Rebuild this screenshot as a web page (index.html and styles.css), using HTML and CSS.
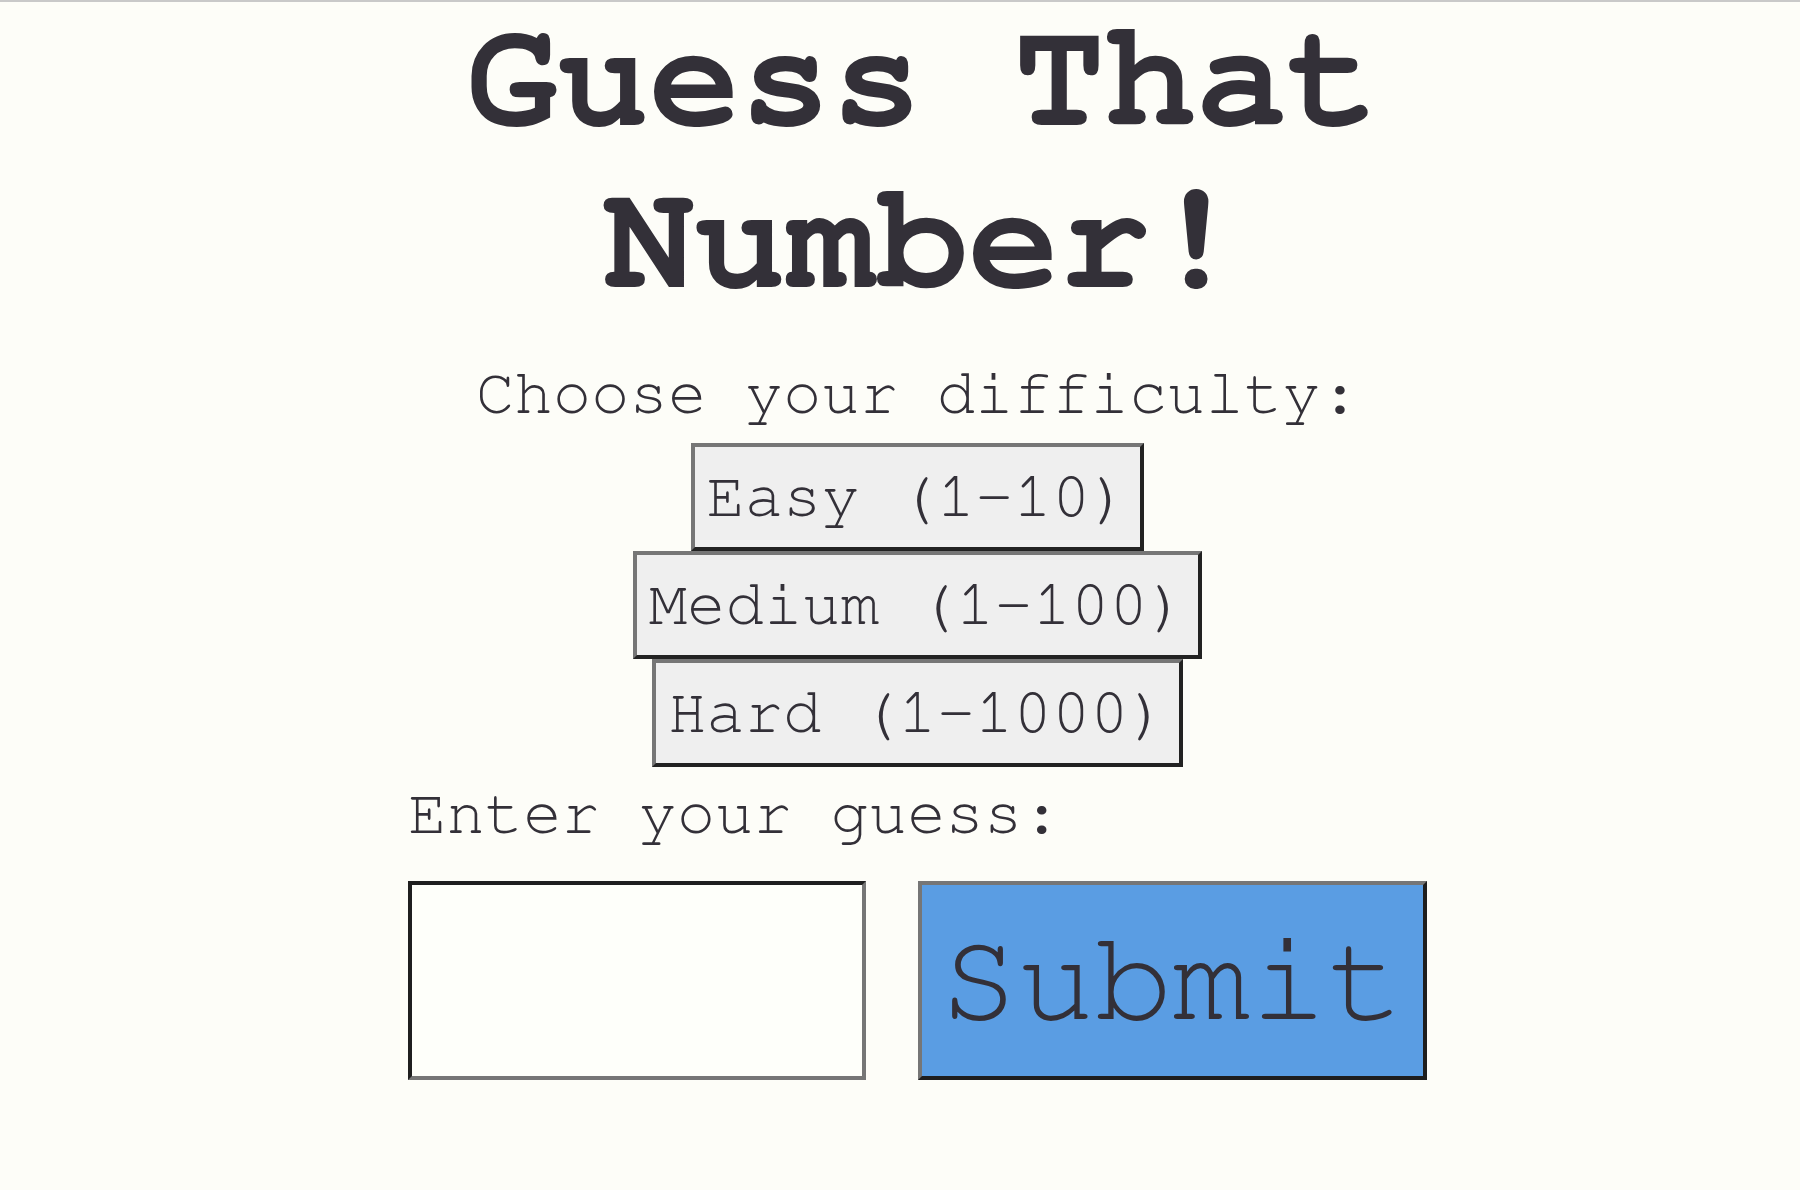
FILE: index.html
```html
<!DOCTYPE html>
<html lang="en">
<head>
<meta charset="utf-8">
<title>Guess That Number!</title>
<link rel="stylesheet" href="styles.css">
</head>
<body class="page">
<main class="game">
  <h1 class="title">Guess That Number!</h1>
  <p class="prompt">Choose your difficulty:</p>
  <div class="levels">
    <button class="level">Easy (1-10)</button>
    <button class="level">Medium (1-100)</button>
    <button class="level">Hard (1-1000)</button>
  </div>
  <form class="guess-form">
    <label class="guess-label" for="guess">Enter your guess:</label>
    <div class="guess-row">
      <input class="guess-input" id="guess" type="text">
      <button class="submit" type="button">Submit</button>
    </div>
  </form>
</main>
</body>
</html>
```
FILE: styles.css
```css
html, body {
  margin: 0;
  padding: 0;
}
.page {
  background: #fdfdf8;
  border-top: 2px solid #c9c9c9;
  padding-left: 35px;
  min-height: 1188px;
  box-sizing: border-box;
  font-family: "Nimbus Mono PS", "Nimbus Mono L", "FreeMono", Courier, "Courier New", "Liberation Mono", monospace;
  color: #333038;
}
.game {
  width: 1019px;
  margin: 0 auto;
  text-align: center;
}
.title {
  margin: -4px 0 0;
  padding-left: 10px;
  font-size: 152px;
  line-height: 162px;
  font-weight: bold;
}
.prompt {
  margin: 40px 0 0;
  font-size: 64px;
  line-height: normal;
}
.levels {
  margin-top: 17px;
  display: flex;
  flex-direction: column;
  align-items: center;
}
.level {
  font-family: inherit;
  font-size: 64px;
  line-height: 72px;
  color: #333038;
  background: #efefef;
  border: 4px solid;
  border-color: #767676 #222222 #222222 #767676;
  padding: 14px 11.5px;
  margin: 0;
}
.guess-form {
  margin-top: 15px;
  text-align: left;
}
.guess-label {
  display: block;
  font-size: 64px;
  line-height: normal;
}
.guess-row {
  margin-top: 35px;
  display: flex;
  justify-content: space-between;
  height: 199px;
}
.guess-input {
  width: 458px;
  box-sizing: border-box;
  margin: 0;
  background: #fefffa;
  border: 4px solid;
  border-color: #1f1f1f #767676 #767676 #1f1f1f;
  font-family: inherit;
  font-size: 64px;
  outline: none;
}
.submit {
  width: 509px;
  box-sizing: border-box;
  margin: 0;
  padding: 0;
  background: #5a9de3;
  border: 4px solid;
  border-color: #767676 #1e1e1e #1e1e1e #767676;
  font-family: inherit;
  font-size: 129px;
  line-height: normal;
  color: #333038;
}
```
